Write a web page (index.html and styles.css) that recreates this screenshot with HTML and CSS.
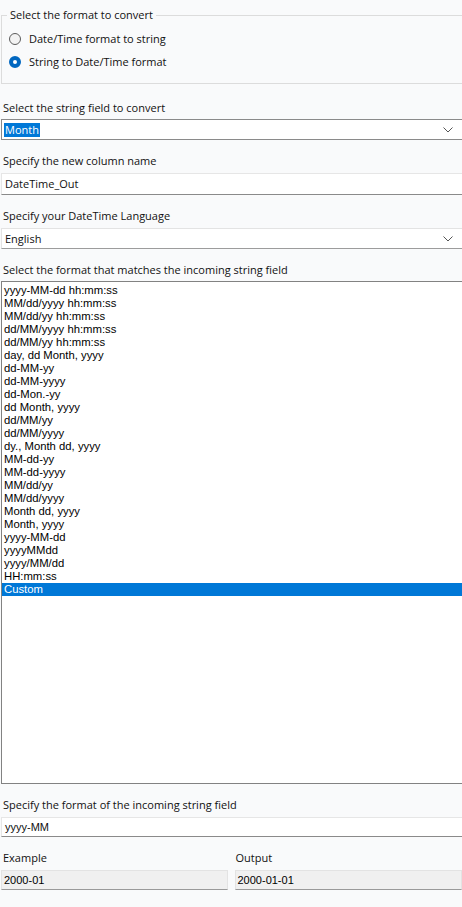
FILE: index.html
```html
<!DOCTYPE html>
<html>
<head>
<meta charset="utf-8">
<link rel="stylesheet" href="styles.css">
</head>
<body>
<div class="page">
  <fieldset class="group">
    <legend class="legend">Select the format to convert</legend>
    <div class="radio-row"><span class="radio"></span><span class="radio-label">Date/Time format to string</span></div>
    <div class="radio-row"><span class="radio radio-on"></span><span class="radio-label">String to Date/Time format</span></div>
  </fieldset>

  <div class="label l1">Select the string field to convert</div>
  <div class="select sel-dark">
    <span class="sel-text sel-hl">Month</span>
    <svg class="chev" width="10" height="6" viewBox="0 0 10 6"><polyline points="0.5,0.5 5,5 9.5,0.5" fill="none" stroke="#555" stroke-width="1"/></svg>
  </div>

  <div class="label l2">Specify the new column name</div>
  <div class="input">DateTime_Out</div>

  <div class="label l2">Specify your DateTime Language</div>
  <div class="select sel-light">
    <span class="sel-text">English</span>
    <svg class="chev" width="10" height="6" viewBox="0 0 10 6"><polyline points="0.5,0.5 5,5 9.5,0.5" fill="none" stroke="#555" stroke-width="1"/></svg>
  </div>

  <div class="label l2">Select the format that matches the incoming string field</div>
  <div class="listbox">
    <div class="item">yyyy-MM-dd hh:mm:ss</div>
    <div class="item">MM/dd/yyyy hh:mm:ss</div>
    <div class="item">MM/dd/yy hh:mm:ss</div>
    <div class="item">dd/MM/yyyy hh:mm:ss</div>
    <div class="item">dd/MM/yy hh:mm:ss</div>
    <div class="item">day, dd Month, yyyy</div>
    <div class="item">dd-MM-yy</div>
    <div class="item">dd-MM-yyyy</div>
    <div class="item">dd-Mon.-yy</div>
    <div class="item">dd Month, yyyy</div>
    <div class="item">dd/MM/yy</div>
    <div class="item">dd/MM/yyyy</div>
    <div class="item">dy., Month dd, yyyy</div>
    <div class="item">MM-dd-yy</div>
    <div class="item">MM-dd-yyyy</div>
    <div class="item">MM/dd/yy</div>
    <div class="item">MM/dd/yyyy</div>
    <div class="item">Month dd, yyyy</div>
    <div class="item">Month, yyyy</div>
    <div class="item">yyyy-MM-dd</div>
    <div class="item">yyyyMMdd</div>
    <div class="item">yyyy/MM/dd</div>
    <div class="item">HH:mm:ss</div>
    <div class="item item-sel">Custom</div>
  </div>

  <div class="label l2">Specify the format of the incoming string field</div>
  <div class="input input-small">yyyy-MM</div>

  <div class="pair">
    <div class="col">
      <div class="label l2">Example</div>
      <div class="readonly">2000-01</div>
    </div>
    <div class="col col-right">
      <div class="label l2">Output</div>
      <div class="readonly">2000-01-01</div>
    </div>
  </div>
</div>
</body>
</html>
```

FILE: styles.css
```css
html, body {
  margin: 0;
  padding: 0;
  background: #f9fafb;
  overflow: hidden;
}
.page {
  width: 462px;
  height: 907px;
  font-family: "Open Sans", "Noto Sans", sans-serif;
  font-size: 11px;
  color: #111111;
  overflow: hidden;
}
.group {
  margin: 7px -4px 0 1px;
  padding: 4px 0 10px 0;
  border: 1px solid #dcdcdc;
}
.legend {
  margin-left: 5px;
  padding: 0 3px;
  line-height: 16px;
  font-size: 11px;
}
.radio-row {
  display: flex;
  align-items: center;
  height: 23px;
  padding-left: 7px;
}
.radio {
  box-sizing: border-box;
  width: 12px;
  height: 12px;
  border-radius: 50%;
  border: 1px solid #5c5c5c;
  background: #f3f3f3;
  margin-right: 8px;
}
.radio-on {
  border: 4px solid #0067c0;
  background: #ffffff;
}
.label {
  padding-left: 3px;
  line-height: 16px;
  height: 16px;
}
.l1 { margin-top: 16px; }
.l2 { margin-top: 13px; }
.select {
  box-sizing: border-box;
  margin: 3px -2px 0 1px;
  height: 21px;
  background: #ffffff;
  display: flex;
  align-items: center;
  justify-content: space-between;
  padding: 0 10px 0 2px;
}
.sel-dark {
  border: 1px solid #8a8a8a;
}
.sel-light {
  border: 1px solid #e3e3e3;
  border-bottom-color: #9c9c9c;
  border-left-color: #e3e3e3;
  margin-top: 4px;
}
.sel-text {
  padding: 0 1px;
  line-height: 14px;
}
.sel-hl {
  background: #0078d7;
  color: #ffffff;
}
.chev {
  display: block;
}
.input {
  box-sizing: border-box;
  margin: 4px -2px 0 1px;
  height: 22px;
  background: #ffffff;
  border: 1px solid #e6e6e6;
  border-bottom-color: #8a8a8a;
  padding: 0 0 0 3px;
  line-height: 20px;
}
.input-small {
  height: 20px;
  line-height: 18px;
  font-family: "Liberation Sans", Arial, sans-serif;
  font-size: 11px;
}
.listbox {
  box-sizing: border-box;
  margin: 3px -2px 0 1px;
  height: 503px;
  background: #ffffff;
  border: 1px solid #828282;
  padding-top: 2px;
  font-family: "Liberation Sans", Arial, sans-serif;
  font-size: 11.3px;
  color: #000000;
}
.item {
  height: 13px;
  line-height: 13px;
  padding-left: 2px;
}
.item-sel {
  background: #0078d7;
  color: #ffffff;
}
.pair {
  display: flex;
  gap: 6px;
  margin-left: 0;
}
.col {
  width: 229px;
}
.col-right {
  width: 230px;
}
.col-right .label {
  padding-left: 2px;
}
.readonly {
  box-sizing: border-box;
  margin: 4px 0 0 1px;
  height: 20px;
  background: #f0f0f0;
  border: 1px solid #e3e3e3;
  border-bottom-color: #9a9a9a;
  padding-left: 2px;
  line-height: 18px;
  font-family: "Liberation Sans", Arial, sans-serif;
  font-size: 11px;
  color: #000000;
}
```
